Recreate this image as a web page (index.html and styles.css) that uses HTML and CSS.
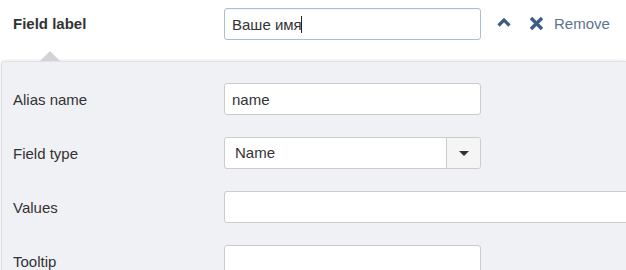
FILE: index.html
```html
<!DOCTYPE html>
<html lang="en">
<head>
    <meta charset="UTF-8">
    <meta name="viewport" content="width=device-width, initial-scale=1.0">
    <title>Field settings</title>
    <link rel="stylesheet" href="styles.css">
</head>
<body>
    <div class="field-head">
        <label class="head-label" for="field-label">Field label</label>
        <div class="head-input">
            <input type="text" id="field-label" value="Ваше имя" class="input input-focus">
            <span class="caret"></span>
        </div>
        <div class="head-actions">
            <a href="#" class="icon-btn" title="Collapse">
                <svg width="14" height="10" viewBox="0 0 14 10">
                    <path d="M1.5 8.5 L7 3 L12.5 8.5" fill="none" stroke="currentColor" stroke-width="3.2"/>
                </svg>
            </a>
            <a href="#" class="remove-btn">
                <svg width="15" height="15" viewBox="0 0 15 15">
                    <path d="M2 2 L13 13 M13 2 L2 13" fill="none" stroke="currentColor" stroke-width="3.4"/>
                </svg>
                <span>Remove</span>
            </a>
        </div>
    </div>

    <div class="field-panel">
        <div class="form-row">
            <label for="alias">Alias name</label>
            <input type="text" id="alias" class="input" value="name">
        </div>
        <div class="form-row">
            <label>Field type</label>
            <div class="select">
                <span class="select-value">Name</span>
                <span class="select-btn"><span class="select-caret"></span></span>
            </div>
        </div>
        <div class="form-row">
            <label for="values">Values</label>
            <input type="text" id="values" class="input input-wide">
        </div>
        <div class="form-row">
            <label for="tooltip">Tooltip</label>
            <input type="text" id="tooltip" class="input">
        </div>
    </div>
</body>
</html>
```

FILE: styles.css
```css
* {
    margin: 0;
    padding: 0;
    box-sizing: border-box;
    font-family: 'Liberation Sans', Arial, sans-serif;
}

body {
    background-color: #fff;
    color: #333;
    width: 626px;
    height: 270px;
    overflow: hidden;
}

.field-head {
    display: flex;
    align-items: flex-start;
    height: 61px;
    padding: 8px 0 0 13px;
}

.head-label {
    flex-shrink: 0;
    width: 211px;
    line-height: 32px;
    font-size: 15px;
    font-weight: bold;
    color: #333;
}

.head-input {
    position: relative;
}

.input {
    display: block;
    flex-shrink: 0;
    width: 257px;
    height: 32px;
    padding: 0 7px;
    border: 1px solid #ccc;
    border-radius: 3px;
    background-color: #fff;
    font-size: 15px;
    color: #333;
}

.input-focus {
    border-color: #a9bfd2;
    box-shadow: inset 0 1px 1px rgba(0, 0, 0, 0.04);
    outline: none;
}

.caret {
    position: absolute;
    left: 77px;
    top: 8px;
    width: 1px;
    height: 17px;
    background-color: #222;
}

.head-actions {
    display: flex;
    align-items: center;
    height: 30px;
    margin-left: 16px;
}

.icon-btn,
.remove-btn {
    color: #3f5d83;
    text-decoration: none;
    display: flex;
    align-items: center;
}

.icon-btn svg {
    margin-top: -3px;
}

.remove-btn {
    margin-left: 18px;
}

.remove-btn span {
    margin-left: 10px;
    font-size: 15px;
    color: #5c7390;
}

.field-panel {
    position: relative;
    margin-left: 1px;
    background-color: #f0f1f5;
    border-left: 1px solid #dcdde1;
    border-top: 1px solid #e2e3e7;
    border-radius: 4px 0 0 0;
    box-shadow: 0 -1px 3px rgba(0, 0, 0, 0.08);
    padding: 21px 0 0 11px;
}

.field-panel::before {
    content: "";
    position: absolute;
    top: -11px;
    left: 38px;
    border-left: 10px solid transparent;
    border-right: 10px solid transparent;
    border-bottom: 10px solid #d2d3d7;
}

.form-row {
    display: flex;
    align-items: center;
    margin-bottom: 22px;
}

.form-row label {
    flex-shrink: 0;
    width: 211px;
    font-size: 15px;
    color: #333;
}

.input-wide {
    width: 420px;
}

.select {
    display: flex;
    flex-shrink: 0;
    width: 257px;
    height: 32px;
    border: 1px solid #ccc;
    border-radius: 3px;
    background-color: #fff;
    overflow: hidden;
}

.select-value {
    flex: 1;
    padding-left: 10px;
    line-height: 30px;
    font-size: 15px;
    color: #333;
}

.select-btn {
    width: 34px;
    border-left: 1px solid #ccc;
    background-color: #f5f5f5;
    display: flex;
    align-items: center;
    justify-content: center;
}

.select-caret {
    border-left: 5px solid transparent;
    border-right: 5px solid transparent;
    border-top: 5px solid #333;
}
```
